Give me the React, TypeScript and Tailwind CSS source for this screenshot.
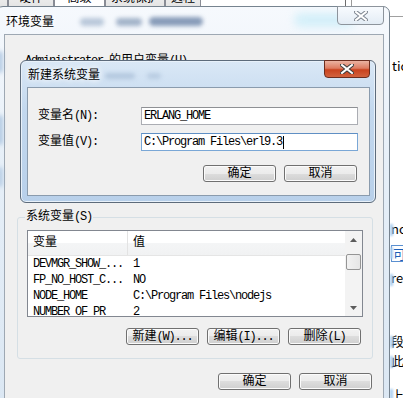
import React from "react";

// Chinese text keeps normal spacing; ASCII uses the tightened mono spacing of the root
const C = ({ children }: { children: React.ReactNode }) => (
    <span className="tracking-normal">{children}</span>
);

const Btn = ({ children }: { children: React.ReactNode }) => (
    <div className="flex h-[17px] w-[73px] items-center justify-center rounded-[3px] border border-[#707070] bg-[linear-gradient(#f2f2f2_0%,#ebebeb_50%,#dddddd_50%,#cfcfcf_100%)] shadow-[inset_0_0_0_1px_#fbfbfb]">
        {children}
    </div>
);

const CloseX = ({ dim }: { dim?: boolean }) => (
    <svg width="14" height="10" viewBox="0 0 14 10">
        <path d="M2 1 L12 9 M12 1 L2 9" stroke={dim ? "#7d8590" : "#3c3c3c"} strokeWidth="4" strokeLinecap="square" />
        <path d="M2 1 L12 9 M12 1 L2 9" stroke="#ffffff" strokeWidth="2" strokeLinecap="square" />
    </svg>
);

const Arrow = ({ down }: { down?: boolean }) => (
    <svg width="7" height="4" viewBox="0 0 7 4">
        <path d={down ? "M0 0 L7 0 L3.5 4 Z" : "M0 4 L3.5 0 L7 4 Z"} fill="#5c5c5c" />
    </svg>
);

const rows = [
    ["DEVMGR_SHOW_...", "1"],
    ["FP_NO_HOST_C...", "NO"],
    ["NODE_HOME", "C:\\Program Files\\nodejs"],
    ["NUMBER_OF_PR", "2"],
];

export default function App() {
    return (
        <div className="relative h-[398px] w-[403px] overflow-hidden bg-white text-[12px] leading-[14px] tracking-[-1.2px] text-black [font-family:'Liberation_Mono','Noto_Sans_CJK_SC',monospace]">
            {/* System properties tabs behind */}
            <div className="absolute left-[-36px] top-[-11px] flex h-[20px] items-stretch">
                {[
                    ["计算机名", 44, false],
                    ["硬件", 46, false],
                    ["高级", 51, true],
                    ["系统保护", 60, false],
                    ["远程", 36, false],
                ].map(([t, w, sel]) => (
                    <div
                        key={t as string}
                        style={{ width: w as number }}
                        className={`flex items-center justify-center border border-[#898c95] ${
                            sel ? "bg-white" : "bg-[linear-gradient(#f3f3f3,#e3e3e3)]"
                        }`}
                    >
                        <C>{t}</C>
                    </div>
                ))}
            </div>
            <div className="absolute left-[345px] top-0 h-[7px] w-[1px] bg-[#6d6d6d]" />
            <div className="absolute left-[351px] top-0 h-[7px] w-[1px] bg-[#9a9a9a]" />
            <div className="absolute left-[390px] top-[16px] h-[1px] w-[13px] bg-[#a0a0a0]" />

            {/* Window behind, on the right */}
            <div className="absolute left-[391px] top-0 h-full w-[40px] tracking-normal [font-family:'Noto_Sans_CJK_SC','Liberation_Sans',sans-serif]">
                <div className="absolute left-[1px] top-[59px] text-[13px]">tics</div>
                <div className="absolute left-0 top-[222px] text-[13px]">nor</div>
                <div className="absolute left-0 top-[245px] border-y border-l border-[#5a8fd0] pl-[1px] text-[13px] leading-[15px] text-[#1c5fb8]">可以</div>
                <div className="absolute left-0 top-[271px] text-[13px]">res</div>
                <div className="absolute left-0 top-[334px] text-[13px]">段落</div>
                <div className="absolute left-0 top-[354px] text-[13px]">此处</div>
                <div className="absolute left-0 top-[388px] text-[13px]">上</div>
                {[230, 253, 280, 342, 362, 395].map(y => (
                    <div key={y} style={{ top: y - 6 }} className="absolute left-[-1px] h-[12px] w-[3px] bg-[#a9cdf0] blur-[1px]" />
                ))}
            </div>

            {/* Environment variables dialog (inactive) */}
            <div className="absolute left-[-4px] top-[6px] flex h-[400px] w-[394px] flex-col rounded-t-[7px] border border-[#76838f] bg-[linear-gradient(180deg,#f6f9fd_0%,#e6eff8_40%,#dbe7f3_100%)] pl-[7px] pr-[5px]">
                <div className="absolute left-0 top-[44px] h-[22px] w-[6px] rounded-full bg-[#8fb0d4] opacity-60 blur-[2px]" />
                <div className="absolute left-0 top-[108px] h-[30px] w-[6px] rounded-full bg-[#8fb0d4] opacity-60 blur-[2px]" />
                <div className="absolute left-0 top-[160px] h-[20px] w-[6px] rounded-full bg-[#8fb0d4] opacity-50 blur-[2px]" />
                <div className="relative h-[27px] shrink-0">
                    <div className="absolute left-[76px] top-[11px] h-[8px] w-[24px] rounded-full bg-[#b9c8da] blur-[2px]" />
                    <div className="absolute left-[112px] top-[11px] h-[8px] w-[26px] rounded-full bg-[#8fa3bd] opacity-80 blur-[2px]" />
                    <div className="absolute left-[145px] top-[10px] h-[9px] w-[54px] rounded-full bg-[#6d85a8] opacity-80 blur-[2px]" />
                    <div className="absolute left-[290px] top-[6px] h-[14px] w-[60px] rounded-full bg-[#c6ecf8] opacity-70 blur-[4px]" />
                    <div className="absolute left-[2px] top-[7px] text-[12px] leading-[14px] tracking-normal [font-family:'Noto_Sans_CJK_SC',sans-serif] [text-shadow:0_0_6px_#fff,0_0_6px_#fff]">
                        环境变量
                    </div>
                </div>
                <div className="absolute right-[5px] top-[-1px] flex h-[19px] w-[47px] items-center justify-center rounded-b-[4px] border border-[#8d949c] bg-[linear-gradient(#f8fbfe,#e3ecf5)]">
                    <CloseX dim />
                </div>

                <div className="flex flex-1 flex-col border border-[#9ea8b3] bg-[#f0f0f0]">
                    <div className="h-[182px] shrink-0 pl-[20px] pt-[19px]">
                        Administrator <C>的用户变量</C>(U)
                    </div>

                    <div className="relative ml-[12px] h-[142px] w-[356px] shrink-0 rounded-[3px] border border-[#d5dfe5] pl-[9px] pr-[11px] pt-[12px]">
                        <div className="absolute left-[7px] top-[-8px] bg-[#f0f0f0] px-[1px]">
                            <C>系统变量</C>(S)
                        </div>
                        <div className="flex h-[87px] w-[336px] border border-[#828790] bg-white">
                            <div className="flex flex-1 flex-col overflow-hidden">
                                <div className="flex h-[25px] shrink-0 border-b border-[#e5e5e5] bg-[linear-gradient(#ffffff_0%,#ffffff_50%,#f4f5f6_50%,#f1f2f3_100%)]">
                                    <div className="flex w-[100px] items-center border-r border-[#e3e3e3] pl-[5px]">
                                        <C>变量</C>
                                    </div>
                                    <div className="flex items-center pl-[5px]">
                                        <C>值</C>
                                    </div>
                                </div>
                                {rows.map(([k, v]) => (
                                    <div key={k} className="flex h-[16px] shrink-0 items-center">
                                        <div className="w-[100px] pl-[5px]">{k}</div>
                                        <div className="pl-[5px]">{v}</div>
                                    </div>
                                ))}
                            </div>
                            <div className="flex w-[17px] flex-col items-center bg-[#f3f3f3]">
                                <div className="flex h-[17px] w-full items-center justify-center">
                                    <Arrow />
                                </div>
                                <div className="mt-[6px] h-[16px] w-[15px] rounded-[2px] border border-[#959595] bg-[linear-gradient(90deg,#f2f2f2,#e6e6e6)]" />
                                <div className="flex-1" />
                                <div className="flex h-[17px] w-full items-center justify-center">
                                    <Arrow down />
                                </div>
                            </div>
                        </div>
                        <div className="mt-[11px] flex justify-end gap-[8px]">
                            <Btn>
                                <C>新建</C>(W)...
                            </Btn>
                            <Btn>
                                <C>编辑</C>(I)...
                            </Btn>
                            <Btn>
                                <C>删除</C>(L)
                            </Btn>
                        </div>
                    </div>

                    <div className="mt-[14px] flex justify-end gap-[8px] pr-[11px]">
                        <Btn>
                            <C>确定</C>
                        </Btn>
                        <Btn>
                            <C>取消</C>
                        </Btn>
                    </div>
                </div>
            </div>

            {/* New system variable dialog (active) */}
            <div className="absolute left-[20px] top-[60px] flex h-[143px] w-[356px] flex-col rounded-[6px] border border-[#5d6b7b] bg-[linear-gradient(180deg,#dae8f6_0%,#c3d8ee_35%,#b8d0ea_100%)] pb-[6px] pl-[6px] pr-[5px] shadow-[inset_0_0_0_1px_#e8f1fa]">
                <div className="relative h-[26px] shrink-0">
                    <div className="absolute left-[78px] top-[12px] h-[6px] w-[30px] rounded-full bg-[#9fb6d0] opacity-60 blur-[2px]" />
                    <div className="absolute left-[120px] top-[12px] h-[6px] w-[14px] rounded-full bg-[#9fb6d0] opacity-50 blur-[2px]" />
                    <div className="absolute left-[1px] top-[6px] text-[12px] leading-[14px] tracking-normal [font-family:'Noto_Sans_CJK_SC',sans-serif] [text-shadow:0_0_6px_#fff,0_0_6px_#fff]">
                        新建系统变量
                    </div>
                </div>
                <div className="absolute right-[5px] top-[-1px] flex h-[18px] w-[46px] items-center justify-center rounded-b-[4px] border border-[#6b2d1f] bg-[linear-gradient(#eab3a2_0%,#dd7c62_45%,#c9431f_55%,#d2623e_100%)]">
                    <CloseX />
                </div>

                <div className="flex flex-1 flex-col border border-[#8a9bad] bg-[#f0f0f0] pl-[10px] pr-[11px] pt-[19px]">
                    <div className="flex h-[18px] items-center justify-between">
                        <div>
                            <C>变量名</C>(N):
                        </div>
                        <div className="flex h-[18px] w-[217px] items-center border border-[#abadb3] border-t-[#8e9094] bg-white pl-[2px]">
                            ERLANG_HOME
                        </div>
                    </div>
                    <div className="mt-[8px] flex h-[18px] items-center justify-between">
                        <div>
                            <C>变量值</C>(V):
                        </div>
                        <div className="flex h-[18px] w-[217px] items-center border border-[#7aa7d6] border-t-[#5f8fc4] bg-white pl-[2px]">
                            C:\Program Files\erl9.3
                            <span className="ml-[1px] h-[13px] w-[1px] bg-black" />
                        </div>
                    </div>
                    <div className="mr-[1px] mt-[14px] flex justify-end gap-[8px]">
                        <Btn>
                            <C>确定</C>
                        </Btn>
                        <Btn>
                            <C>取消</C>
                        </Btn>
                    </div>
                </div>
            </div>
        </div>
    );
}
